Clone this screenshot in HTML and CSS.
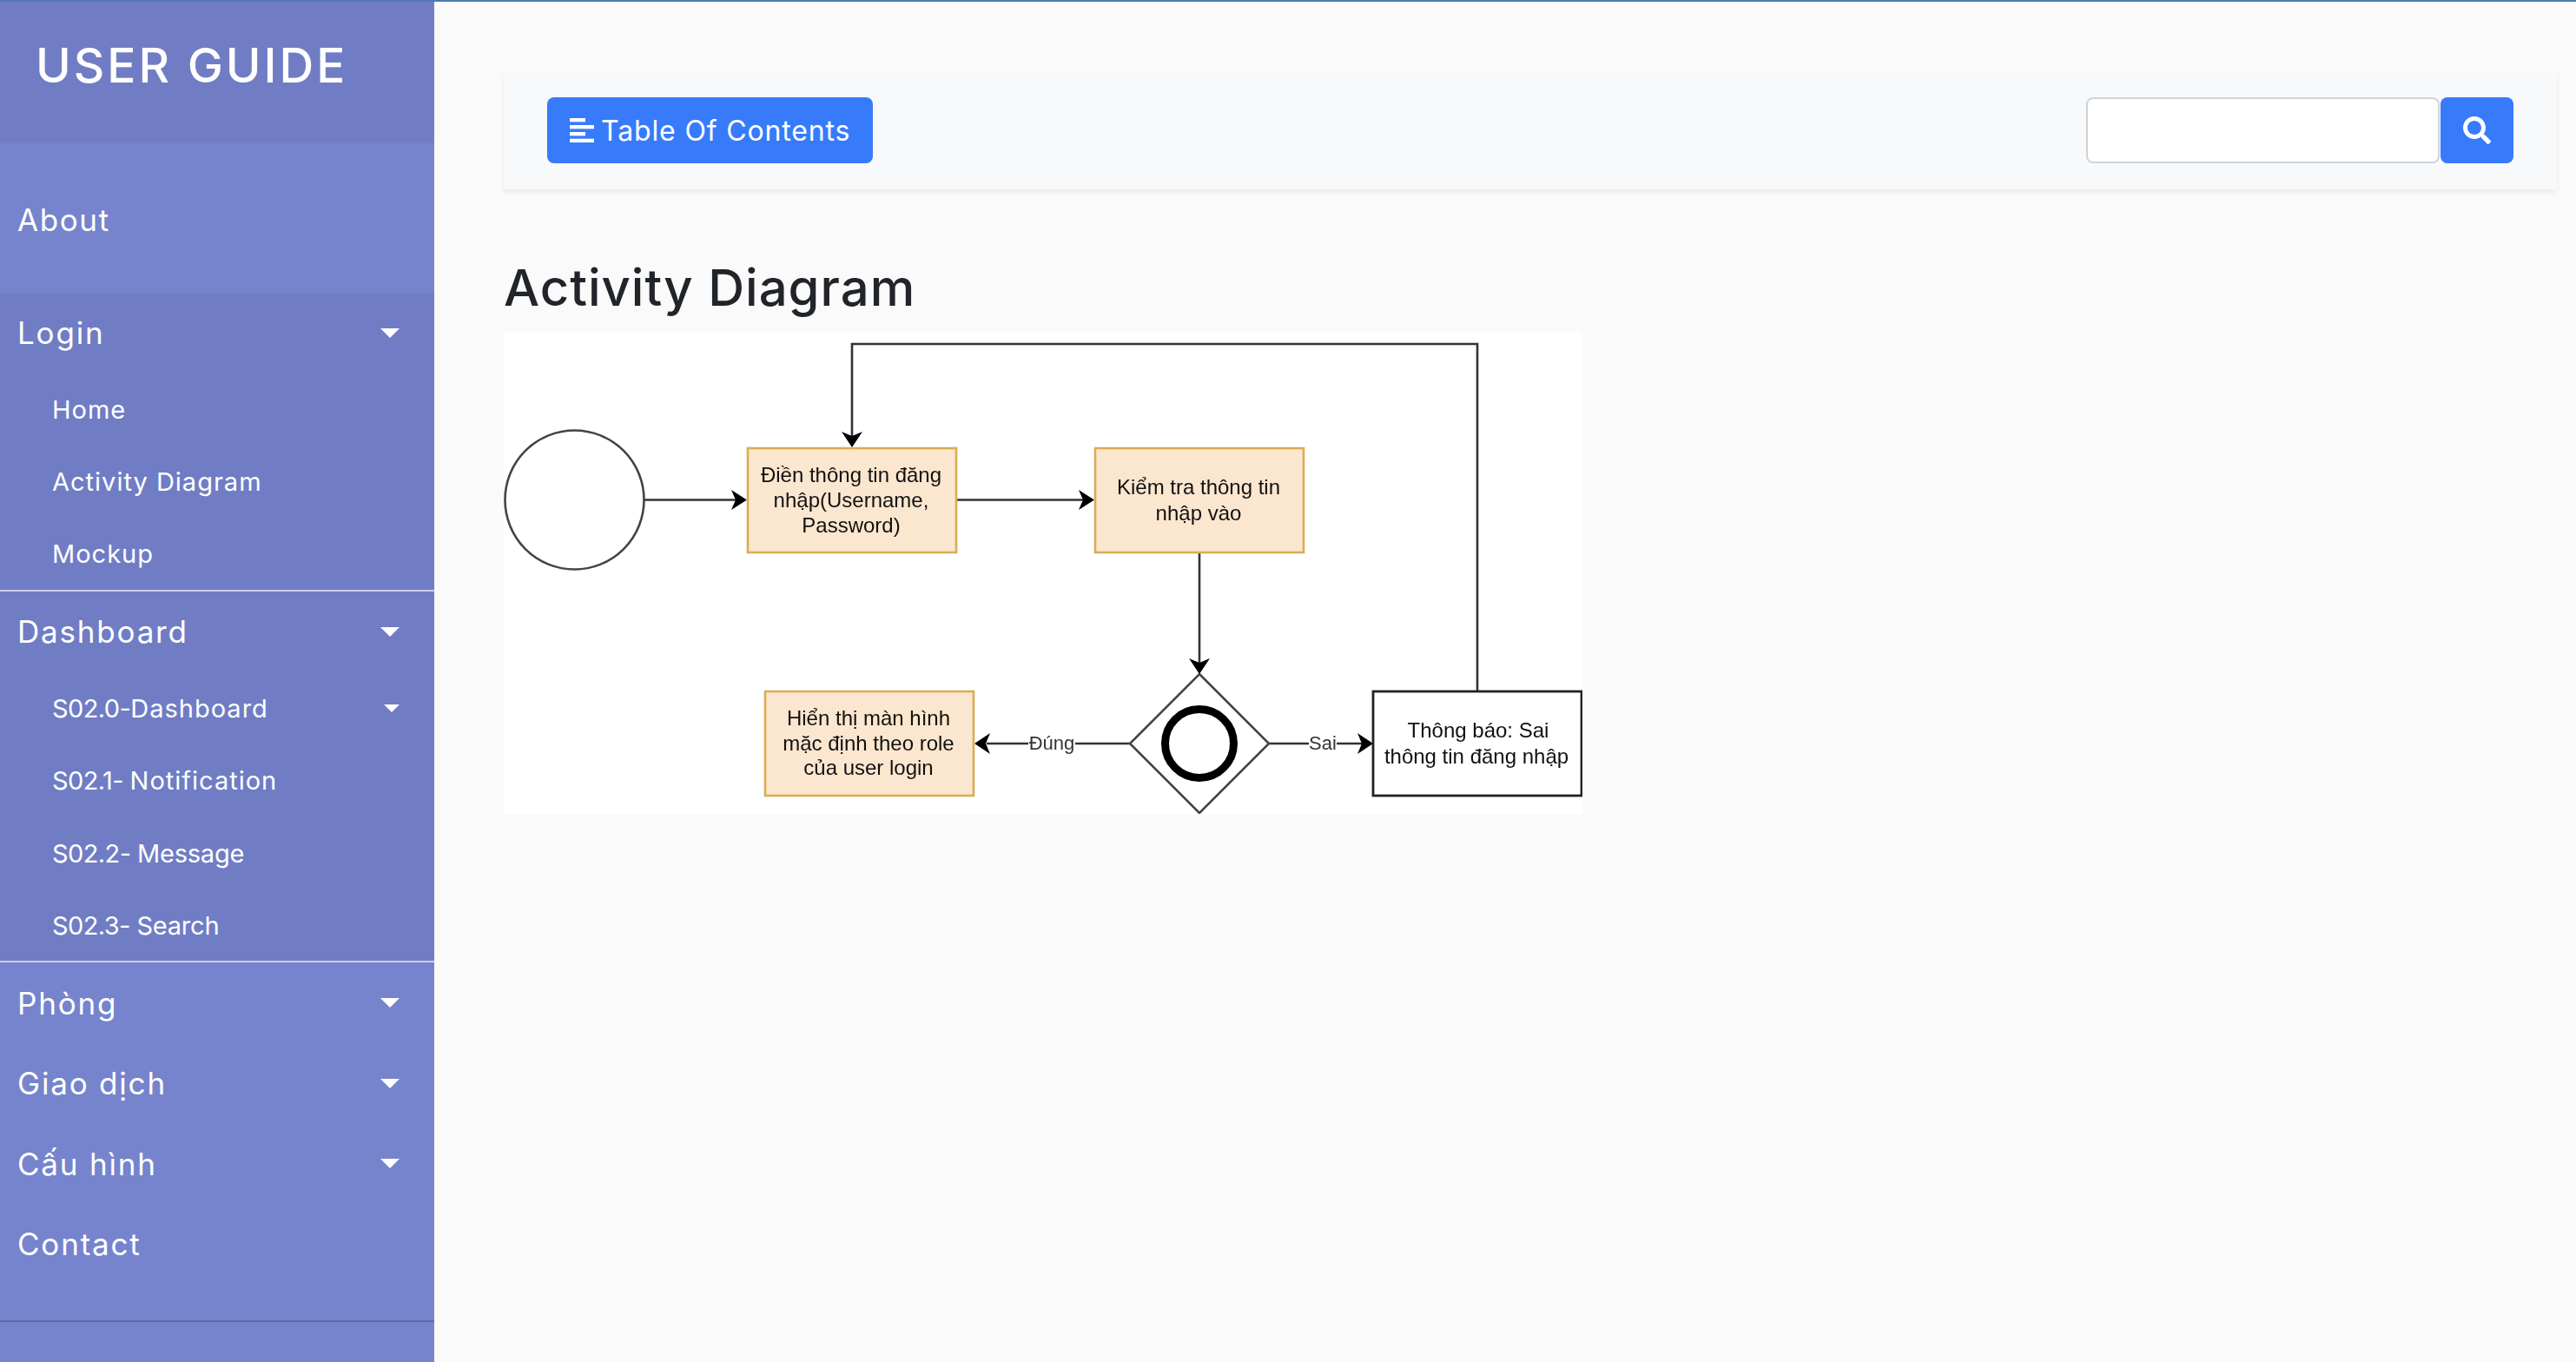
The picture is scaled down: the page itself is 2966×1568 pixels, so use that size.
FILE: index.html
```html
<!DOCTYPE html>
<html lang="vi">
<head>
<meta charset="utf-8">
<title>User Guide - Activity Diagram</title>
<link rel="stylesheet" href="styles.css">
</head>
<body>
<div class="top-line"></div>
<div class="page">
  <nav class="sidebar">
    <header class="brand"><span class="brand-title">USER GUIDE</span></header>
    <a class="about">About</a>
    <section class="group">
      <div class="main-item"><span>Login</span><i class="caret"></i></div>
      <a class="sub-item">Home</a>
      <a class="sub-item">Activity Diagram</a>
      <a class="sub-item">Mockup</a>
    </section>
    <section class="group">
      <div class="main-item"><span>Dashboard</span><i class="caret"></i></div>
      <div class="sub-item"><span><span class="code">S02.0-</span>Dashboard</span><i class="caret caret-small"></i></div>
      <a class="sub-item"><span><span class="code">S02.1- </span>Notification</span></a>
      <a class="sub-item"><span><span class="code">S02.2- </span><span class="tight">Message</span></span></a>
      <a class="sub-item"><span><span class="code">S02.3- </span><span class="tight">Search</span></span></a>
    </section>
    <section class="rest">
      <div class="main-item"><span>Phòng</span><i class="caret"></i></div>
      <div class="main-item"><span>Giao dịch</span><i class="caret"></i></div>
      <div class="main-item"><span>Cấu hình</span><i class="caret"></i></div>
      <div class="main-item"><span>Contact</span></div>
    </section>
  </nav>
  <main class="content">
    <div class="toolbar">
      <button class="toc-button" type="button">
        <svg class="toc-icon" viewBox="0 0 28 28" aria-hidden="true">
          <rect x="0" y="0" width="18" height="4.3"/>
          <rect x="0" y="8" width="28" height="4.3"/>
          <rect x="0" y="16" width="18" height="4.3"/>
          <rect x="0" y="23.7" width="28" height="4.3"/>
        </svg>
        <span>Table Of Contents</span>
      </button>
      <form class="search">
        <input class="search-input" type="text" aria-label="Search">
        <button class="search-button" type="button" aria-label="Search">
          <svg class="search-icon" viewBox="0 0 512 512" aria-hidden="true"><path d="M505 442.7L405.3 343c-4.5-4.5-10.6-7-17-7H372c27.6-35.3 44-79.7 44-128C416 93.1 322.9 0 208 0S0 93.1 0 208s93.1 208 208 208c48.3 0 92.7-16.4 128-44v16.3c0 6.4 2.5 12.5 7 17l99.7 99.7c9.4 9.4 24.6 9.4 33.9 0l28.3-28.3c9.4-9.4 9.4-24.6.1-34zM208 336c-70.7 0-128-57.2-128-128 0-70.7 57.2-128 128-128 70.7 0 128 57.2 128 128 0 70.7-57.2 128-128 128z"/></svg>
        </button>
      </form>
    </div>
    <h1 class="title">Activity Diagram</h1>
    <svg class="diagram" viewBox="580 382 1242 555" width="1242" height="555" role="img" aria-label="Activity diagram">
      <g class="line">
        <circle class="start" cx="661.5" cy="575.5" r="80"/>
        <path d="M742 575.5H848"/>
        <path d="M1102 575.5H1248"/>
        <path d="M1701 795V396H981V503"/>
        <path d="M1381 636V764"/>
        <path d="M1301 856H1136"/>
        <path d="M1461 856H1569"/>
        <path class="diamond" d="M1381 776L1461 856L1381 936L1301 856Z"/>
      </g>
      <circle class="ring" cx="1381" cy="856" r="39.5"/>
      <g class="head">
        <path d="M860 575.5L842 564L847 575.5L842 587Z"/>
        <path d="M1260 575.5L1242 564L1247 575.5L1242 587Z"/>
        <path d="M981 515L969 497L981 502L993 497Z"/>
        <path d="M1381 776L1369 758L1381 763L1393 758Z"/>
        <path d="M1122 856L1140 844L1135 856L1140 868Z"/>
        <path d="M1581 856L1563 844L1568 856L1563 868Z"/>
      </g>
      <rect class="box" x="861" y="516" width="240" height="120"/>
      <rect class="box" x="1261" y="516" width="240" height="120"/>
      <rect class="box" x="881" y="796" width="240" height="120"/>
      <rect class="box-plain" x="1581" y="796" width="240" height="120"/>
      <rect class="label-bg" x="1184" y="843" width="54" height="26"/>
      <rect class="label-bg" x="1507" y="843" width="32" height="26"/>
      <g class="diagram-text">
        <text x="980" y="555">Điền thông tin đăng</text>
        <text x="980" y="584">nhập(Username,</text>
        <text x="980" y="613">Password)</text>
        <text x="1380" y="569">Kiểm tra thông tin</text>
        <text x="1380" y="599">nhập vào</text>
        <text x="1000" y="835">Hiển thị màn hình</text>
        <text x="1000" y="864">mặc định theo role</text>
        <text x="1000" y="892">của user login</text>
        <text x="1702" y="849">Thông báo: Sai</text>
        <text x="1700" y="879">thông tin đăng nhập</text>
        <text class="edge-label" x="1211" y="863">Đúng</text>
        <text class="edge-label" x="1523" y="863">Sai</text>
      </g>
    </svg>
  </main>
</div>
</body>
</html>
```
FILE: styles.css
```css
* { box-sizing: border-box; }
html, body { margin: 0; height: 100%; overflow: hidden; }
body {
  display: flex;
  flex-direction: column;
  background: #fafafa;
  color: #212529;
  font-family: Inter, "Noto Sans", sans-serif;
}
.top-line { height: 2px; background: #4f78b4; flex: none; }
.page { flex: 1; display: flex; min-height: 0; }

.sidebar {
  width: 500px;
  flex: none;
  display: flex;
  flex-direction: column;
  background: #7684cd;
  color: #fff;
}
.brand {
  height: 163px;
  background: #707dc4;
  padding: 42px 0 0 41px;
}
.brand-title {
  display: block;
  font-size: 55px;
  line-height: 62px;
  letter-spacing: 3px;
  font-weight: 500;
}
.about {
  display: flex;
  align-items: center;
  height: 172px;
  padding: 3px 20px 0;
  font-size: 35px;
  letter-spacing: 1.6px;
}
.group {
  background: #707dc4;
  border-bottom: 2px solid #c8cee9;
}
.rest { border-bottom: 2px solid #5a6ca4; padding-bottom: 42px; }
.main-item {
  display: flex;
  align-items: center;
  justify-content: space-between;
  height: 92.5px;
  padding: 0 40px 0 20px;
  font-size: 35px;
  letter-spacing: 1.8px;
}
.sub-item {
  display: flex;
  align-items: center;
  justify-content: space-between;
  height: 83.2px;
  padding: 1px 40px 0 60px;
  font-size: 29px;
  letter-spacing: 1px;
}
.code { letter-spacing: -.6px; white-space: pre; }
.tight { letter-spacing: -.2px; }
.caret {
  width: 0;
  height: 0;
  border-left: 11px solid transparent;
  border-right: 11px solid transparent;
  border-top: 11px solid #fff;
}
.caret-small {
  border-left-width: 9px;
  border-right-width: 9px;
  border-top-width: 9px;
}

.content { flex: 1; min-width: 0; padding: 80px 22px 0 80px; }
.toolbar {
  display: flex;
  align-items: center;
  justify-content: space-between;
  height: 136px;
  padding: 0 50px;
  background: #f8f9fa;
  box-shadow: 0 3px 6px rgba(0, 0, 0, .07);
}
.toc-button {
  display: flex;
  align-items: center;
  gap: 8px;
  width: 375px;
  height: 76px;
  padding: 0 0 0 26px;
  border: 0;
  border-radius: 8px;
  background: #377bfb;
  color: #fff;
  font: 400 32px Inter, "Noto Sans", sans-serif;
  letter-spacing: .85px;
}
.toc-icon { width: 28px; height: 28px; fill: #fff; flex: none; }
.search { display: flex; gap: 1px; }
.search-input {
  width: 407px;
  height: 76px;
  border: 2px solid #ced4da;
  border-radius: 8px;
  background: #fff;
}
.search-button {
  display: flex;
  align-items: center;
  justify-content: center;
  width: 84px;
  height: 76px;
  padding: 0;
  border: 0;
  border-radius: 8px;
  background: #377bfb;
}
.search-icon { width: 32px; height: 32px; fill: #fff; }

.title {
  margin: 77px 0 15px;
  font-size: 58px;
  line-height: 72px;
  font-weight: 500;
  letter-spacing: 1px;
  color: #212529;
}
.diagram { display: block; background: #fff; filter: blur(.6px); }
.line { fill: none; stroke: #333; stroke-width: 2.6; }
.start { stroke: #444; fill: #fff; }
.diamond { fill: #fff; stroke: #444; }
.ring { fill: none; stroke: #000; stroke-width: 9; }
.head { fill: #000; }
.box { fill: #fbe6cf; stroke: #d9ad53; stroke-width: 2.6; }
.box-plain { fill: #fff; stroke: #222; stroke-width: 2.8; }
.label-bg { fill: #fff; }
.diagram-text {
  font-family: "Liberation Sans", Arial, sans-serif;
  font-size: 24px;
  fill: #111;
  text-anchor: middle;
}
.edge-label { font-size: 22px; fill: #333; }
```
